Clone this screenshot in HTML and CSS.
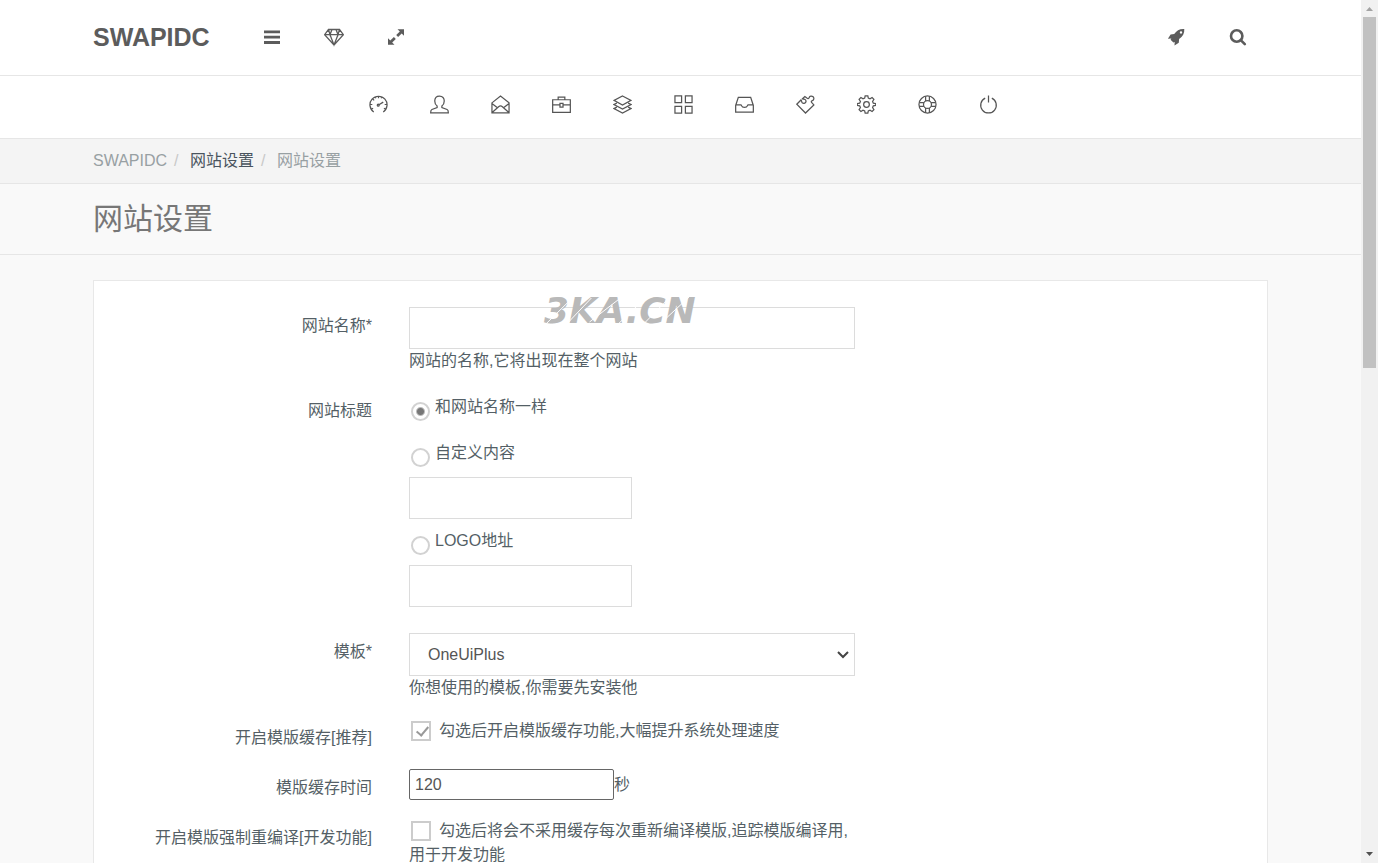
FILE: index.html
```html
<!DOCTYPE html>
<html lang="zh-CN">
<head>
<meta charset="utf-8">
<meta name="viewport" content="width=device-width, initial-scale=1">
<title>网站设置 - SWAPIDC</title>
<link rel="stylesheet" href="styles.css">
</head>
<body>
<div class="shell">
  <div class="page">
    <header class="topbar">
      <a class="brand" href="#">SWAPIDC</a>
      <div class="tools">
        <button class="icon-btn" type="button" aria-label="菜单"><svg viewBox="0 0 20 20" class="solid"><path d="M2 3.5h16v2.8H2zM2 8.8h16v2.8H2zM2 14.1h16v2.8H2z"/></svg></button>
        <button class="icon-btn" type="button" aria-label="主题"><svg viewBox="0 0 20 20" class="line"><path d="M4.500 2.500h11L19.400 7.700 10 18 .6 7.700zM.6 7.700h18.800M6 7.700L10 18l4-10.300M4.500 2.500L6 7.700 8 2.500M15.500 2.500L14 7.700l-2-5.200"/></svg></button>
        <button class="icon-btn" type="button" aria-label="全屏"><svg viewBox="0 0 20 20" class="solid"><path d="M11.500 2.200H18v6.500l-2.300-2.300-3.600 3.600-1.900-1.900 3.600-3.600zM2 11.300l2.300 2.300 3.600-3.600 1.900 1.900-3.600 3.600 2.300 2.300H2z"/></svg></button>
      </div>
      <div class="tools tools-end">
        <button class="icon-btn" type="button" aria-label="快捷"><svg viewBox="0 0 20 20" class="solid"><path fill-rule="evenodd" d="M18.300 2.100c-4.700-.3-7.700 1.500-10.100 5L4.600 7.400 1.900 11.700l3.400-.2-.7 1.300 2.800 2.800 1.300-.7-.2 3.700 4.300-2.800.3-3.700c3.700-2.400 5.500-5.700 5.200-10zM15 6.600a1.200 1.200 0 1 1 0-2.400 1.200 1.200 0 0 1 0 2.400z"/></svg></button>
        <button class="icon-btn" type="button" aria-label="搜索"><svg viewBox="0 0 20 20" class="bold"><circle cx="8.700" cy="9" r="5.700"/><path d="M13 13.300l3.800 3.800" stroke-linecap="round"/></svg></button>
      </div>
    </header>

    <nav class="mainnav" aria-label="主导航">
      <a href="#" aria-label="仪表盘"><svg viewBox="0 0 20 20" class="line"><path d="M5 17.800a9 9 0 1 1 10 0M10 1.200v2.300M1.200 10h2.300M18.800 10h-2.300M3.900 4.100l1.500 1.500M6.500 1.800l.7 1.700M13.500 1.800l-.7 1.700M2.600 15l1.700-1M17.400 15l-1.700-1M10 10.500l5-3"/><circle cx="9.700" cy="10.700" r="1"/></svg></a>
      <a href="#" aria-label="用户"><svg viewBox="0 0 20 20" class="line"><path d="M10 1.200c-3.200 0-5 2.100-5 5.200 0 2.300 1 4.200 2.500 5.200v1.700L2 15.300Q.7 15.900.7 18.700h18.600q0-2.800-1.300-3.400l-5.500-2v-1.700c1.500-1 2.500-2.900 2.500-5.200 0-3.100-1.800-5.200-5-5.200z"/></svg></a>
      <a href="#" aria-label="邮件"><svg viewBox="0 0 20 20" class="line"><path d="M1 8.300L10 1l9 7.300v10.400H1zM1 9l5.800 4.500M19 9l-5.800 4.500M1.500 18.200L8 12.300q2-1.700 4 0l6.500 5.900"/></svg></a>
      <a href="#" aria-label="产品"><svg viewBox="0 0 20 20" class="line"><path d="M.7 5h18.600v13.300H.7zM6.500 5V2.200h7V5M.7 10.300h7.600M11.700 10.300h7.600M8.400 8.700h3.200v4H8.400z"/></svg></a>
      <a href="#" aria-label="订单"><svg viewBox="0 0 20 20" class="line"><path d="M10 1l9 4.700-9 4.800-9-4.800zM4 8.500L1 10l9 4.700 9-4.700-3-1.500M4 12.800l-3 1.500L10 19l9-4.700-3-1.500"/></svg></a>
      <a href="#" aria-label="应用"><svg viewBox="0 0 20 20" class="line"><path d="M1 1h7v7H1zM12 1h7v7h-7zM1 12h7v7H1zM12 12h7v7h-7z"/></svg></a>
      <a href="#" aria-label="收件箱"><svg viewBox="0 0 20 20" class="line"><path d="M3.500 2.500h13L19.300 11v7H.7v-7zM.8 10.500H6c.7 0 .8.300 1 .9.700 2.200 5.300 2.200 6 0 .2-.6.300-.9 1-.9h5.200"/></svg></a>
      <a href="#" aria-label="插件"><svg viewBox="0 0 20 20" class="line"><path d="M.8 9.700L5.300 5.200c1 .8.300 2 1.300 3 1 .9 2.600.7 3.300-.2.800-1 .7-2.300-.2-3.100-.9-.8-2-.2-2.900-1l2.500-2.300 2.500 1.900c.9.600 1.800 0 2.100-.9.500-1.700 2.800-1.900 4.100-.7 1.200 1.200 1.100 3.500-.8 4-.9.300-1.400 1-.8 1.900l2.400 2.600L10 19z"/></svg></a>
      <a href="#" aria-label="设置"><svg viewBox="0 0 20 20" class="line"><circle cx="10" cy="10" r="3"/><path d="M8.600.8h2.800l.5 2.500 1.800.8 2.200-1.400 1.900 1.900-1.400 2.200.8 1.800 2.500.5v1.800l-2.500.5-.8 1.800 1.400 2.200-1.900 1.900-2.200-1.400-1.800.8-.5 2.500H8.600l-.5-2.500-1.800-.8-2.200 1.400-1.900-1.900 1.400-2.200-.8-1.800-2.500-.5V9.100l2.500-.5.800-1.800-1.400-2.200 1.900-1.900 2.200 1.400 1.800-.8z"/></svg></a>
      <a href="#" aria-label="支持"><svg viewBox="0 0 20 20" class="line"><circle cx="10" cy="10" r="9"/><circle cx="10" cy="10" r="4.200"/><path d="M8 1.300v4.900M12 1.300v4.900M8 13.800v4.900M12 13.800v4.900M1.300 8h4.900M1.300 12h4.900M13.800 8h4.900M13.800 12h4.900"/></svg></a>
      <a href="#" aria-label="退出"><svg viewBox="0 0 20 20" class="line"><path d="M6.500 3.300a8.200 8.200 0 1 0 7 0M10 .5v7.500"/></svg></a>
    </nav>

    <nav class="crumbs" aria-label="面包屑">
      <a class="muted" href="#">SWAPIDC</a><span class="sep">/</span><a class="strong" href="#">网站设置</a><span class="sep">/</span><span class="muted">网站设置</span>
    </nav>

    <div class="heading"><h1>网站设置</h1></div>

    <main class="content">
      <form class="card">
        <div class="row">
          <label class="name" for="site-name">网站名称*</label>
          <div class="field marked">
            <input class="box" type="text" id="site-name">
            <p class="help">网站的名称,它将出现在整个网站</p>
            <div class="mark">3KA.CN
              <svg class="cuts" viewBox="0 0 160 32" preserveAspectRatio="none"><path d="M2 29L32 1M22 31L50 3M48 27L82 2M76 31L107 3M106 28L132 3M120 31L153 2"/></svg>
            </div>
          </div>
        </div>

        <div class="row" role="radiogroup" aria-labelledby="title-label">
          <span class="name" id="title-label">网站标题</span>
          <div class="field choices">
            <div class="option alone"><input type="radio" name="title" id="t-same" checked><label for="t-same">和网站名称一样</label></div>
            <div class="option"><input type="radio" name="title" id="t-custom"><label for="t-custom">自定义内容</label></div>
            <input class="box half" type="text" aria-label="自定义内容">
            <div class="option"><input type="radio" name="title" id="t-logo"><label for="t-logo">LOGO地址</label></div>
            <input class="box half" type="text" aria-label="LOGO地址">
          </div>
        </div>

        <div class="row">
          <label class="name" for="template">模板*</label>
          <div class="field">
            <div class="select-wrap">
              <select class="box" id="template"><option>OneUiPlus</option></select>
              <svg class="chevron" viewBox="0 0 12 8"><path d="M1 1l5 5 5-5"/></svg>
            </div>
            <p class="help">你想使用的模板,你需要先安装他</p>
          </div>
        </div>

        <div class="row">
          <span class="name">开启模版缓存[推荐]</span>
          <div class="field"><label class="check"><input type="checkbox" checked>勾选后开启模版缓存功能,大幅提升系统处理速度</label></div>
        </div>

        <div class="row">
          <label class="name" for="cache-time">模版缓存时间</label>
          <div class="field timed"><input class="plain" type="text" id="cache-time" value="120"><span>秒</span></div>
        </div>

        <div class="row">
          <span class="name">开启模版强制重编译[开发功能]</span>
          <div class="field"><label class="check"><input type="checkbox">勾选后将会不采用缓存每次重新编译模版,追踪模版编译用,用于开发功能</label></div>
        </div>
      </form>
    </main>
  </div>

  <div class="scrollbar" aria-hidden="true">
    <svg class="arrow up" viewBox="0 0 17 17"><path d="M5 11h7L8.500 7z"/></svg>
    <div class="track"><div class="thumb"></div></div>
    <svg class="arrow down" viewBox="0 0 17 17"><path d="M5 6h7l-3.500 4z"/></svg>
  </div>
</div>
</body>
</html>
```

FILE: styles.css
```css
* { box-sizing: border-box; }

body {
  margin: 0;
  font: 16px/24px "Liberation Sans", "Noto Sans CJK SC", sans-serif;
  color: #545f66;
  background: #f9f9f9;
}

a { color: inherit; text-decoration: none; }
p, h1 { margin: 0; }

.shell { display: flex; height: 100vh; overflow: hidden; }
.page { flex: 1; min-width: 0; overflow: hidden; }

.topbar, .mainnav, .crumbs, .heading { border-bottom: 1px solid #e6e6e6; padding: 0 93px; }

.topbar { display: flex; align-items: center; height: 76px; padding-bottom: 2px; background: #fff; color: #5c5c5c; }
.brand { font-size: 25px; font-weight: bold; line-height: 30px; }
.tools { display: flex; gap: 42px; margin-left: 52px; }
.tools-end { margin: 0 20px 0 auto; }
.icon-btn { display: block; padding: 0; border: 0; background: none; color: inherit; cursor: pointer; }
.icon-btn svg { display: block; width: 20px; height: 20px; }

.solid { fill: currentColor; }
.line { fill: none; stroke: currentColor; stroke-width: 1.3; }
.bold { fill: none; stroke: currentColor; stroke-width: 2.6; }

.mainnav { display: flex; justify-content: center; align-items: center; gap: 42px; height: 63px; padding: 0 91px 6px 97px; background: #fff; color: #555; }
.mainnav svg { display: block; width: 19px; height: 19px; }

.crumbs { display: flex; align-items: center; height: 45px; background: #f4f4f4; }
.muted { color: #98a0a3; }
.strong { color: #4a545e; }
.sep { width: 23px; padding-left: 7px; color: #c8c8c8; }

.heading { display: flex; align-items: center; height: 71px; }
h1 { font-size: 30px; font-weight: 400; line-height: 40px; color: #777; }

.content { padding: 25px 93px; }
.card { display: grid; gap: 19px; padding: 26px 0; border: 1px solid #e8e8e8; background: #fff; }
.row { display: grid; grid-template-columns: 278fr 446fr 375fr; column-gap: 37px; align-items: start; }
.name { padding-top: 7px; text-align: right; }

.box {
  display: block;
  width: 100%;
  height: 42px;
  padding: 0 18px;
  border: 1px solid #dcdcdc;
  border-radius: 0;
  background: #fff;
  color: #555;
  font: inherit;
}
.half { width: 50%; }

.marked { position: relative; }
.mark {
  position: absolute;
  left: 135px;
  top: -12px;
  font: italic bold 36px/32px "DejaVu Sans", sans-serif;
  color: #b9b9b9;
  white-space: nowrap;
  pointer-events: none;
}
.cuts { position: absolute; left: 0; top: 0; width: 100%; height: 32px; fill: none; stroke: #fff; stroke-width: 1; }

.choices { padding-bottom: 7px; }
.option { display: flex; align-items: flex-start; padding: 3px 0 10px 2px; }
.option.alone { padding-bottom: 17px; }
.box + .option { padding-top: 10px; }
.option input {
  appearance: none;
  width: 19px;
  height: 19px;
  margin: 7px 5px 0 0;
  border: 2px solid #d2d2d2;
  border-radius: 50%;
  background: #fff;
}
.option input:checked { background: radial-gradient(circle, #777 0 3px, #fff 5px); }
.option label { height: 24px; }

.select-wrap { position: relative; }
.select-wrap select { appearance: none; height: 43px; }
.chevron { position: absolute; right: 6px; top: 18px; width: 12px; height: 8px; fill: none; stroke: #444; stroke-width: 2; pointer-events: none; }

.check { display: block; }
.check input {
  appearance: none;
  width: 20px;
  height: 20px;
  margin: -2px 8px 0 2px;
  border: 2px solid #ccc;
  background: #fff;
  vertical-align: middle;
}
.check input::before { content: ""; display: block; }
.check input:checked::before {
  width: 5px;
  height: 10px;
  margin: 1px 0 0 6px;
  border: solid #999;
  border-width: 0 2px 2px 0;
  transform: rotate(40deg);
}

.timed { display: flex; align-items: center; }
.plain { width: 205px; height: 31px; padding: 0 5px; border: 1px solid #666; border-radius: 2px; background: #fff; color: #555; font: inherit; }

.scrollbar { display: flex; flex-direction: column; width: 17px; background: #f1f1f1; }
.arrow { display: block; width: 17px; height: 17px; }
.up { fill: #a3a3a3; }
.down { fill: #505050; }
.track { flex: 1; padding: 0 2px; }
.thumb { height: 42.3%; background: #c1c1c1; }
```
